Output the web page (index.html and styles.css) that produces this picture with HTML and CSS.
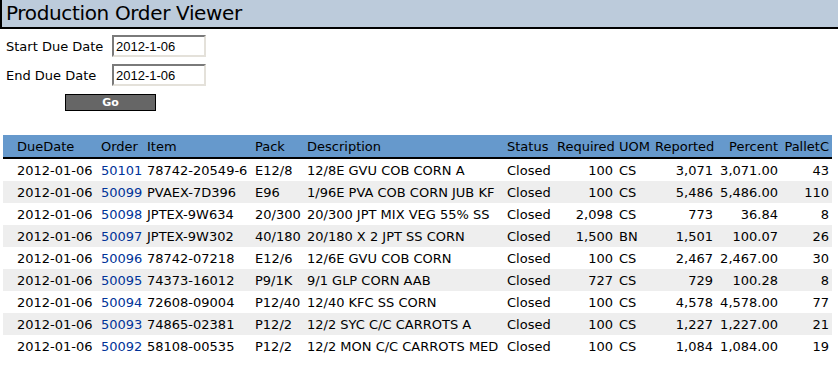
FILE: index.html
```html
<!DOCTYPE html>
<html lang="en">
  <head>
    <meta charset="utf-8">
    <title>Production Order Viewer</title>
    <link rel="stylesheet" href="styles.css">
  </head>
  <body>
    <h1 class="page-title">Production Order Viewer</h1>

    <form class="date-form">
      <label for="startDate">Start Due Date</label>
      <input type="text" id="startDate" value="2012-1-06" />
      <label for="endDate">End Due Date</label>
      <input type="text" id="endDate" value="2012-1-06" />
      <button type="button" class="go-button">Go</button>
    </form>

    <table class="orders">
      <colgroup>
        <col class="c-date">
        <col class="c-order">
        <col class="c-item">
        <col class="c-pack">
        <col class="c-desc">
        <col class="c-status">
        <col class="c-req">
        <col class="c-uom">
        <col class="c-rep">
        <col class="c-pct">
        <col class="c-pallet">
      </colgroup>
      <thead>
        <tr>
          <th class="first">DueDate</th>
          <th>Order</th>
          <th>Item</th>
          <th>Pack</th>
          <th>Description</th>
          <th>Status</th>
          <th class="num">Required</th>
          <th>UOM</th>
          <th class="num">Reported</th>
          <th class="num">Percent</th>
          <th class="num">PalletC</th>
        </tr>
      </thead>
      <tbody>
        <tr>
          <td class="first">2012-01-06</td><td><a href="#">50101</a></td><td>78742-20549-6</td><td>E12/8</td><td>12/8E GVU COB CORN A</td><td>Closed</td><td class="num">100</td><td>CS</td><td class="num">3,071</td><td class="num">3,071.00</td><td class="num">43</td>
        </tr>
        <tr>
          <td class="first">2012-01-06</td><td><a href="#">50099</a></td><td>PVAEX-7D396</td><td>E96</td><td>1/96E PVA COB CORN JUB KF</td><td>Closed</td><td class="num">100</td><td>CS</td><td class="num">5,486</td><td class="num">5,486.00</td><td class="num">110</td>
        </tr>
        <tr>
          <td class="first">2012-01-06</td><td><a href="#">50098</a></td><td>JPTEX-9W634</td><td>20/300</td><td>20/300 JPT MIX VEG 55% SS</td><td>Closed</td><td class="num">2,098</td><td>CS</td><td class="num">773</td><td class="num">36.84</td><td class="num">8</td>
        </tr>
        <tr>
          <td class="first">2012-01-06</td><td><a href="#">50097</a></td><td>JPTEX-9W302</td><td>40/180</td><td>20/180 X 2 JPT SS CORN</td><td>Closed</td><td class="num">1,500</td><td>BN</td><td class="num">1,501</td><td class="num">100.07</td><td class="num">26</td>
        </tr>
        <tr>
          <td class="first">2012-01-06</td><td><a href="#">50096</a></td><td>78742-07218</td><td>E12/6</td><td>12/6E GVU COB CORN</td><td>Closed</td><td class="num">100</td><td>CS</td><td class="num">2,467</td><td class="num">2,467.00</td><td class="num">30</td>
        </tr>
        <tr>
          <td class="first">2012-01-06</td><td><a href="#">50095</a></td><td>74373-16012</td><td>P9/1K</td><td>9/1 GLP CORN AAB</td><td>Closed</td><td class="num">727</td><td>CS</td><td class="num">729</td><td class="num">100.28</td><td class="num">8</td>
        </tr>
        <tr>
          <td class="first">2012-01-06</td><td><a href="#">50094</a></td><td>72608-09004</td><td>P12/40</td><td>12/40 KFC SS CORN</td><td>Closed</td><td class="num">100</td><td>CS</td><td class="num">4,578</td><td class="num">4,578.00</td><td class="num">77</td>
        </tr>
        <tr>
          <td class="first">2012-01-06</td><td><a href="#">50093</a></td><td>74865-02381</td><td>P12/2</td><td>12/2 SYC C/C CARROTS A</td><td>Closed</td><td class="num">100</td><td>CS</td><td class="num">1,227</td><td class="num">1,227.00</td><td class="num">21</td>
        </tr>
        <tr>
          <td class="first">2012-01-06</td><td><a href="#">50092</a></td><td>58108-00535</td><td>P12/2</td><td>12/2 MON C/C CARROTS MED</td><td>Closed</td><td class="num">100</td><td>CS</td><td class="num">1,084</td><td class="num">1,084.00</td><td class="num">19</td>
        </tr>
      </tbody>
    </table>
  </body>
</html>
```

FILE: styles.css
```css
body {
  margin: 0;
  font-family: "DejaVu Sans", Verdana, sans-serif;
  font-size: 13px;
  color: #000;
  background: #fff;
}

.page-title {
  margin: 0 1px 0 0;
  height: 27px;
  padding-left: 4px;
  background-color: #bccbdb;
  border-left: 2px solid #000;
  border-bottom: 2px solid #000;
  font-size: 20px;
  font-weight: normal;
  letter-spacing: -0.35px;
  line-height: 27px;
}

.date-form {
  display: grid;
  grid-template-columns: 106px 94px;
  row-gap: 7px;
  align-items: center;
  padding: 6px 0 0 6px;
}

.date-form input[type="text"] {
  width: 94px;
  height: 22px;
  box-sizing: border-box;
  padding: 1px 2px;
  border-width: 2px;
  border-style: solid;
  border-color: #7a7a7a #e4e1da #e4e1da #7a7a7a;
  font-family: "Liberation Sans", Arial, sans-serif;
  font-size: 13px;
}

.go-button {
  grid-column: 1 / 3;
  width: 91px;
  height: 17px;
  margin: 1px 0 0 59px;
  padding: 0;
  background-color: #666;
  border: 1px solid #000;
  color: #fff;
  font-family: "DejaVu Sans", Verdana, sans-serif;
  font-size: 11px;
  font-weight: bold;
  line-height: 14px;
}

.orders {
  margin: 24px 0 0 3px;
  width: 829px;
  table-layout: fixed;
  border-collapse: collapse;
}

.orders th,
.orders td {
  height: 22px;
  padding: 0 3px;
  text-align: left;
  white-space: nowrap;
  overflow: hidden;
}

.orders th {
  font-weight: normal;
  background-color: #6699cc;
  border-bottom: 2px solid #000;
}

.orders .first {
  padding-left: 14px;
}

.orders .num {
  text-align: right;
}

.orders tbody tr:nth-child(even) {
  background-color: #eeeeee;
}

.orders a {
  color: #003399;
  text-decoration: none;
}

.c-date { width: 95px; }
.c-order { width: 46px; }
.c-item { width: 108px; }
.c-pack { width: 52px; }
.c-desc { width: 200px; }
.c-status { width: 50px; }
.c-req { width: 62px; }
.c-uom { width: 36px; }
.c-rep { width: 64px; }
.c-pct { width: 65px; }
.c-pallet { width: 51px; }
```
